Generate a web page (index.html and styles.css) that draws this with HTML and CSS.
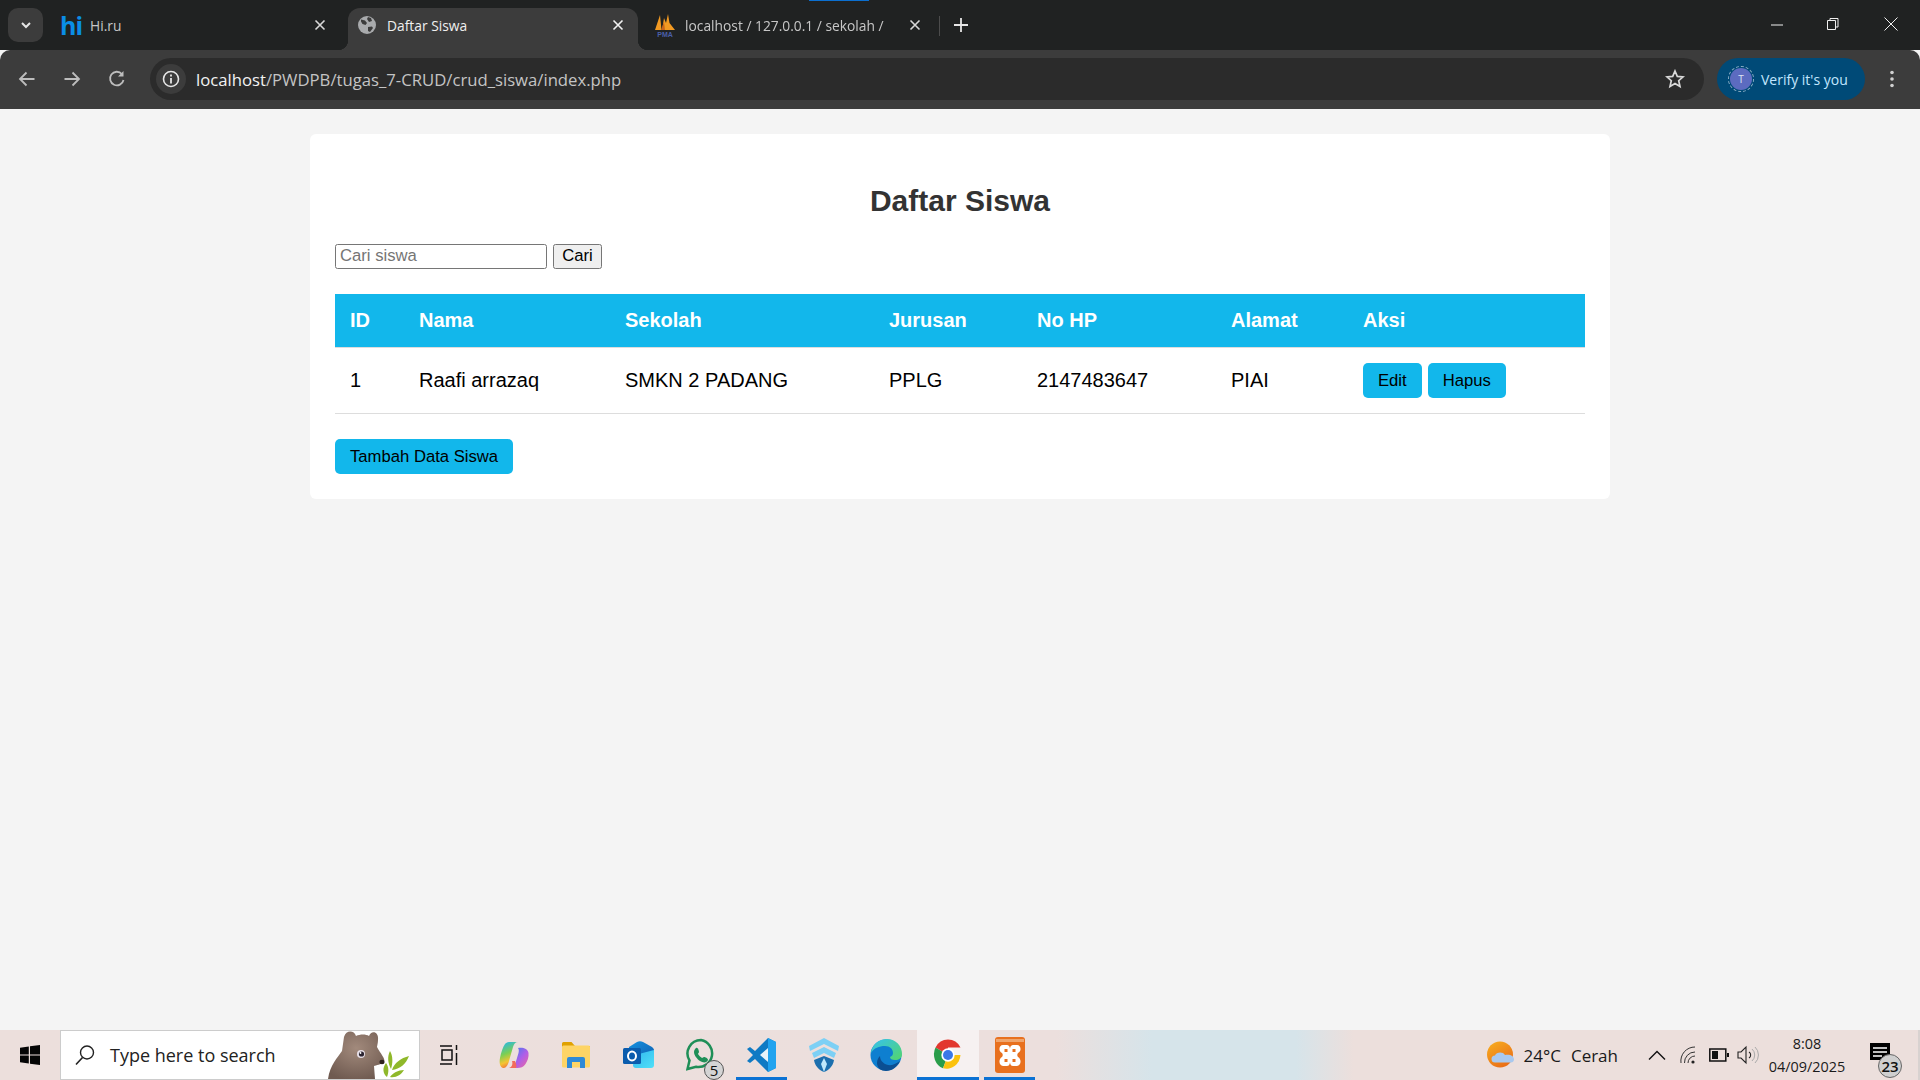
FILE: index.html
```html
<!DOCTYPE html>
<html lang="id">
<head>
<meta charset="utf-8">
<title>Daftar Siswa</title>
<link rel="stylesheet" href="styles.css">
</head>
<body>
<header class="tabstrip">
  <span class="tab-search"><svg width="14" height="14" viewBox="0 0 14 14"><path d="M3 5l4 4 4-4" fill="none" stroke="#e6e6e6" stroke-width="2"/></svg></span>
  <div class="tab tab-first">
    <span class="hi-logo">hi</span>
    <span class="tab-title">Hi.ru</span>
    <svg class="tab-close" width="12" height="12" viewBox="0 0 12 12"><path d="M1.5 1.5l9 9M10.5 1.5l-9 9" stroke="#d8d8d8" stroke-width="1.6"/></svg>
  </div>
  <div class="tab tab-active">
    <svg class="globe" width="18" height="18" viewBox="0 0 18 18"><circle cx="9" cy="9" r="9" fill="#a9abad"/><path d="M3 3.500l4 1 2 2.500-1.500 2-3-1-1.500-2.500zM10 11l4-.5 1 1.500-3 4-2-1zM10 1l3 1 1 3-3 1-2-3z" fill="#3c3c3c"/></svg>
    <span class="tab-title tab-title-active">Daftar Siswa</span>
    <svg class="tab-close" width="12" height="12" viewBox="0 0 12 12"><path d="M1.5 1.5l9 9M10.5 1.5l-9 9" stroke="#f2f2f2" stroke-width="1.6"/></svg>
  </div>
  <div class="tab tab-third">
    <svg class="pma" width="22" height="24" viewBox="0 0 22 24"><path d="M1 17L6 2l1.500 15zM8 17L10 5l2 5 2-9 1.500 9L21 17z" fill="#f29a22"/><path d="M7 17L10 9l1 8z" fill="#c9661a"/><text x="11" y="23.500" text-anchor="middle" class="pma-text">PMA</text></svg>
    <span class="tab-title tab-title-clip">localhost / 127.0.0.1 / sekolah / </span>
    <svg class="tab-close" width="12" height="12" viewBox="0 0 12 12"><path d="M1.5 1.5l9 9M10.5 1.5l-9 9" stroke="#d8d8d8" stroke-width="1.6"/></svg>
  </div>
  <span class="tab-sep"></span>
  <svg class="tab-plus" width="14" height="14" viewBox="0 0 14 14"><path d="M7 0v14M0 7h14" stroke="#e6e6e6" stroke-width="1.8"/></svg>
  <span class="strip-fill"></span>
  <svg class="win-btn win-min" width="12" height="12" viewBox="0 0 12 12"><path d="M0 6h12" stroke="#f0f0f0" stroke-width="1"/></svg>
  <svg class="win-btn win-max" width="14" height="14" viewBox="0 0 14 14"><path d="M1.500 3.500h8v9h-8zM4 3.500V1.500h8v8.500h-2.500" fill="none" stroke="#f0f0f0" stroke-width="1"/></svg>
  <svg class="win-btn win-x" width="14" height="14" viewBox="0 0 14 14"><path d="M.5.5l13 13M13.500.5l-13 13" stroke="#f0f0f0" stroke-width="1"/></svg>
  <span class="top-accent"></span>
</header>
<nav class="toolbar">
  <svg class="nav-btn" width="18" height="16" viewBox="0 0 18 16"><path d="M16.500 8H2M8.500 1.500L2 8l6.500 6.500" fill="none" stroke="#bdbdbd" stroke-width="1.800"/></svg>
  <svg class="nav-btn" width="18" height="16" viewBox="0 0 18 16"><path d="M1.500 8H16M9.500 1.500L16 8l-6.500 6.500" fill="none" stroke="#bdbdbd" stroke-width="1.800"/></svg>
  <svg class="nav-btn" width="18" height="18" viewBox="0 0 18 18"><path d="M15.500 10a6.800 6.800 0 1 1-1.600-6" fill="none" stroke="#bdbdbd" stroke-width="1.800"/><path d="M15.500 1v5.500H10z" fill="#bdbdbd"/></svg>
  <div class="omnibox">
    <span class="info"><svg width="18" height="18" viewBox="0 0 18 18"><circle cx="9" cy="9" r="7.500" fill="none" stroke="#e6e6e6" stroke-width="1.600"/><path d="M9 8v5.500M9 4.500v2" stroke="#e6e6e6" stroke-width="1.800"/></svg></span>
    <span class="url"><span class="url-host">localhost</span>/PWDPB/tugas_7-CRUD/crud_siswa/index.php</span>
    <svg class="star" width="20" height="20" viewBox="0 0 20 20"><path d="M10 2l2.300 5.400 5.700.5-4.300 3.800 1.300 5.700-5-3-5 3 1.300-5.700L2 7.900l5.700-.5z" fill="none" stroke="#d8d8d8" stroke-width="1.700"/></svg>
  </div>
  <div class="profile">
    <span class="avatar">T</span>
    <span class="profile-text">Verify it's you</span>
  </div>
  <svg class="menu" width="4" height="18" viewBox="0 0 4 18"><circle cx="2" cy="2.500" r="1.800" fill="#d0d0d0"/><circle cx="2" cy="9" r="1.800" fill="#d0d0d0"/><circle cx="2" cy="15.500" r="1.800" fill="#d0d0d0"/></svg>
</nav>
<main class="page">
  <section class="container">
    <h2 class="title">Daftar Siswa</h2>
    <form class="search-form">
      <input class="search-input" type="text" placeholder="Cari siswa">
      <button class="search-btn" type="button">Cari</button>
    </form>
    <table class="data">
      <thead>
        <tr>
          <th class="c-id">ID</th><th class="c-nama">Nama</th><th class="c-sek">Sekolah</th><th class="c-jur">Jurusan</th><th class="c-hp">No HP</th><th class="c-al">Alamat</th><th>Aksi</th>
        </tr>
      </thead>
      <tbody>
        <tr>
          <td>1</td><td>Raafi arrazaq</td><td>SMKN 2 PADANG</td><td>PPLG</td><td>2147483647</td><td>PIAI</td>
          <td class="actions-cell"><div class="actions"><a class="btn">Edit</a><a class="btn">Hapus</a></div></td>
        </tr>
      </tbody>
    </table>
    <a class="btn btn-add">Tambah Data Siswa</a>
  </section>
</main>
<footer class="taskbar">
  <span class="start"><svg width="20" height="20" viewBox="0 0 20 20"><path d="M0 2.800l8.800-1.300v8H0zM10 1.300L20 0v9.500H10zM0 10.500h8.800v8L0 17.200zM10 10.500h10V20l-10-1.300z" fill="#050505"/></svg></span>
  <div class="searchbox">
    <svg class="lens" width="20" height="22" viewBox="0 0 20 22"><circle cx="12" cy="8.500" r="6.500" fill="none" stroke="#222" stroke-width="1.400"/><path d="M7.500 13.500L1 20.500" stroke="#222" stroke-width="1.600"/></svg>
    <span class="search-text">Type here to search</span>
    <svg class="bear" width="84" height="50" viewBox="0 0 84 50">
      <defs><radialGradient id="fur" cx=".5" cy=".35" r=".7"><stop offset="0" stop-color="#a28a7c"/><stop offset="1" stop-color="#6f5a50"/></radialGradient></defs>
      <path d="M0 50C2 36 10 28 14 22L16 8C18 1 26 1 28 7C32 5 38 5 41 7C43 1 51 2 50 11C50 14 49 17 49 18C52 24 58 30 56 33C53 36 48 36 46 37L47 50z" fill="url(#fur)"/>
      <circle cx="33" cy="25" r="4" fill="#e8e0e8"/><circle cx="33.500" cy="25" r="2.600" fill="#2b2330"/><circle cx="32.500" cy="24" r=".9" fill="#fff"/>
      <ellipse cx="54" cy="33" rx="2.600" ry="2.200" fill="#2d221e"/>
      <path d="M62 22c3 5 3 12 1 18-3-6-4-12-1-18zM58 34c3 4 3 9 1 14-4-3-5-9-1-14zM64 41c2-7 9-12 17-14-3 8-9 13-17 14zM62 48c3-4 8-7 14-7-3 5-8 8-14 7z" fill="#8fb82a"/>
    </svg>
  </div>
  <div class="apps">
    <span class="app"><svg class="taskview" width="20" height="24" viewBox="0 0 20 24"><path d="M1 3h12M1 21h12M3 7h10v10H3zM17.500 2v5M17.500 10v12" fill="none" stroke="#111" stroke-width="1.500"/></svg></span>
    <span class="app"><svg width="30" height="28" viewBox="0 0 30 28"><defs><linearGradient id="cp1" x1="0" y1="0" x2="1" y2="1"><stop offset="0" stop-color="#2f7ff0"/><stop offset=".55" stop-color="#b05ee8"/><stop offset="1" stop-color="#f0689a"/></linearGradient><linearGradient id="cp2" x1=".2" y1="0" x2=".5" y2="1"><stop offset="0" stop-color="#25b8e8"/><stop offset=".45" stop-color="#7ccf52"/><stop offset=".75" stop-color="#f5c531"/><stop offset="1" stop-color="#f0663c"/></linearGradient></defs><path d="M19 7c4-1 10 0 10.500 5 .5 4-1 8-3 11-2 3-5 4-8 4h-6c2-1 3-3 4-5l3-10c.5-2 .5-4-.5-5z" fill="url(#cp1)"/><path d="M10 1h9c-3 0-4 2-5 5l-4 14c-1 4-3 7-5 7C1 27 0 22 1 17 2 11 4 6 6 3c1-1 2-2 4-2z" fill="url(#cp2)"/><path d="M13 20c1 3 0 6-3 7h7c1-2 0-5-1-7z" fill="#f26b5b"/></svg></span>
    <span class="app"><svg width="28" height="26" viewBox="0 0 28 26"><path d="M0 1.500A1.500 1.500 0 0 1 1.500 0h8L13 4h15v3H0z" fill="#e0a100"/><rect y="3.500" width="28" height="22" rx="1.500" fill="#fed465"/><path d="M5 26v-9a2 2 0 0 1 2-2h14a2 2 0 0 1 2 2v9h-5v-6h-8v6z" fill="#2f8ad6"/></svg></span>
    <span class="app"><svg width="31" height="28" viewBox="0 0 31 28"><defs><linearGradient id="ol" x1="0" y1="0" x2="1" y2="1"><stop offset="0" stop-color="#1490df"/><stop offset="1" stop-color="#0f5fb0"/></linearGradient><linearGradient id="ol2" x1="0" y1="0" x2="1" y2="1"><stop offset="0" stop-color="#2fb6ee"/><stop offset="1" stop-color="#50e0f8"/></linearGradient></defs><path d="M14 1c2-1 4-1 6 0l9 5c1 1 2 2 2 3v4L17 19H6V6z" fill="url(#ol)"/><path d="M12 14l19-5v15c0 2-1 3-3 3H13c-2 0-3-1-3-3z" fill="url(#ol2)"/><rect y="7" width="18" height="16" rx="1.500" fill="#0b5cad"/><ellipse cx="9" cy="15" rx="4" ry="4.500" fill="none" stroke="#fff" stroke-width="2"/></svg></span>
    <span class="app"><svg class="wa" width="31" height="34" viewBox="0 0 31 34"><path d="M15 2a13.500 13.500 0 0 0-11.500 20.500L1.500 31l8.500-2.200A13.500 13.500 0 1 0 15 2z" fill="none" stroke="#1f8f57" stroke-width="2.500"/><path d="M10 10c2-1 3 3 3 4s-1 1-1 2c1 2 3 3 4 4 1 0 1-1 2-1s4 1 4 3c-1 3-5 3-8 1s-6-6-6-9c0-2 1-3 2-4z" fill="#1f8f57"/></svg><span class="wa-badge">5</span></span>
    <span class="app app-line"><svg width="30" height="36" viewBox="0 0 30 36"><path d="M21 1l8 4v26l-8 4-13-13-5 4-3-2 6-6-6-6 3-2 5 4z" fill="#0f7ac4"/><path d="M21 1l8 4v26l-8 4z" fill="#22a3ef"/><path d="M21 11v14l-8-7z" fill="#fff" opacity=".9"/></svg></span>
    <span class="app"><svg width="30" height="34" viewBox="0 0 30 34"><path d="M15 0L30 8l-1 5-14-7L1 13 0 8z" fill="#7dd0f5"/><path d="M15 9l12 6-2 5-10-5-10 5-2-5z" fill="#7dd0f5"/><path d="M5 22l10-4 10 4c-1 6-5 10-10 12C10 32 6 28 5 22z" fill="#1c6fae"/><path d="M15 20l3 6-3 8-3-8z" fill="#bfe8fb"/></svg></span>
    <span class="app"><svg width="32" height="36" viewBox="0 0 32 36"><defs><linearGradient id="ed" x1="0" y1="0" x2="1" y2="1"><stop offset="0" stop-color="#35c1f1"/><stop offset="1" stop-color="#54d66a"/></linearGradient></defs><circle cx="16" cy="18" r="15.500" fill="#0e7fd0"/><path d="M1 16C3 4 13 2 17 2c9 0 15 7 15 15 0 4-3 6-7 6-3 0-5-1-5-3 2-1 3-2 3-4 0-4-3-7-8-7-6 0-11 2-14 7z" fill="url(#ed)"/><path d="M10 19c0 6 6 10 12 9 4-1 6-3 8-4-3 6-8 10-14 10-5 0-9-3-9-8 0-3 1-5 3-7z" fill="#0b4f92"/></svg></span>
    <span class="app app-active"><svg width="30" height="36" viewBox="0 0 36 36"><path d="M18 18L3 9A17 18 0 0 1 33 9H18z" fill="#e2372e"/><path d="M18 18L3 9A17 18 0 0 0 12 34z" fill="#2a9d4a"/><path d="M18 18h15a17 18 0 0 1-21 16z" fill="#fbc20e"/><circle cx="18" cy="18" r="8" fill="#fff"/><circle cx="18" cy="18" r="6" fill="#3b78e7"/></svg></span>
    <span class="app app-line"><svg width="30" height="36" viewBox="0 0 30 36"><rect width="30" height="36" rx="3" fill="#e8701e"/><rect x="1" y="2" width="28" height="3" fill="#f0a56c"/><path d="M8 8h4c3 0 3 4 3 4s0-4 3-4h4c4 0 5 6 1 8-1 1-1 3 0 4 4 2 3 9-1 9h-4c-3 0-3-4-3-4s0 4-3 4H8c-4 0-5-7-1-9 1-1 1-3 0-4-4-2-3-8 1-8z" fill="#fff"/><path d="M9.500 12h3v3h-3zM17.500 12h3v3h-3zM9.500 22h3v3h-3zM17.500 22h3v3h-3z" fill="#e8701e"/></svg></span>
  </div>
  <span class="strip-fill"></span>
  <div class="tray">
    <svg class="weather" width="28" height="28" viewBox="0 0 28 28"><defs><linearGradient id="sun" x1="0" y1="0" x2=".6" y2="1"><stop offset="0" stop-color="#f8b01f"/><stop offset="1" stop-color="#ea6f18"/></linearGradient></defs><circle cx="13" cy="13.500" r="13" fill="url(#sun)"/><path d="M8 21.500a3.500 3.500 0 0 1 0-7c1-3.500 8-4.500 10-.5 5-1 9 1 9 4.500 0 2-1.500 3-3 3z" fill="#a9c9ef"/></svg>
    <span class="temp">24°C</span>
    <span class="cond">Cerah</span>
    <svg class="tray-caret" width="18" height="12" viewBox="0 0 18 12"><path d="M1 10.500l8-8 8 8" fill="none" stroke="#111" stroke-width="1.400"/></svg>
    <svg class="tray-wifi" width="16" height="20" viewBox="0 0 16 20"><path d="M1 18A14 14 0 0 1 15 2M4.500 18A10.500 10.500 0 0 1 15 7M8 18a7 7 0 0 1 7-7" fill="none" stroke="#333" stroke-width="1"/><circle cx="13" cy="17" r="1.600" fill="#222"/></svg>
    <svg class="tray-batt" width="20" height="14" viewBox="0 0 20 14"><rect x=".8" y="1" width="16" height="12" fill="none" stroke="#111" stroke-width="1.500"/><rect x="3" y="3" width="6" height="8" fill="#111"/><rect x="18" y="5" width="2" height="4" fill="#111"/></svg>
    <svg class="tray-vol" width="22" height="20" viewBox="0 0 22 20"><path d="M1 7h3l5-5v16l-5-5H1z" fill="none" stroke="#222" stroke-width="1.100"/><path d="M12 7a3.500 3.500 0 0 1 0 6" fill="none" stroke="#222" stroke-width="1.100"/><path d="M15 4a8 8 0 0 1 0 12M18 2a11 11 0 0 1 0 16" fill="none" stroke="#aaa" stroke-width="1"/></svg>
    <div class="clock"><span>8:08</span><span>04/09/2025</span></div>
    <span class="notif"><svg width="20" height="22" viewBox="0 0 20 22"><path d="M0 0h20v17h-20z" fill="#000"/><path d="M3 5h14M3 9h14M3 13h9" stroke="#fff" stroke-width="1.300"/></svg><span class="notif-badge">23</span></span>
  </div>
</footer>
</body>
</html>
```
FILE: styles.css
```css
* { box-sizing: border-box; }
html, body { margin: 0; height: 100%; }
body {
  display: flex;
  flex-direction: column;
  height: 100vh;
  overflow: hidden;
  font-family: "Liberation Sans", Arial, sans-serif;
  background: #f4f4f4;
}

/* tab strip */
.tabstrip {
  position: relative;
  flex: 0 0 50px;
  display: flex;
  align-items: flex-end;
  background: #202222;
  padding-left: 8px;
}
.top-accent {
  position: absolute;
  left: 809px;
  top: 0;
  width: 60px;
  height: 1px;
  background: #0b6fd0;
}
.tab-search {
  width: 35px;
  height: 34px;
  margin-bottom: 8px;
  border-radius: 10px;
  background: #3c3c3c;
  display: flex;
  align-items: center;
  justify-content: center;
}
.tab {
  position: relative;
  height: 42px;
  padding-bottom: 8px;
  display: flex;
  align-items: center;
  font-family: "Open Sans", sans-serif;
  font-size: 13.800px;
  color: #c7c7c7;
}
.tab-first { width: 305px; padding-left: 17px; }
.tab-active {
  width: 290px;
  padding-left: 10px;
  background: #3c3c3c;
  border-radius: 12px 12px 0 0;
  color: #f0f0f0;
}
.tab-active::before, .tab-active::after {
  content: "";
  position: absolute;
  bottom: 0;
  width: 10px;
  height: 10px;
}
.tab-active::before { left: -10px; background: radial-gradient(circle at 0 0, transparent 10px, #3c3c3c 10.500px); }
.tab-active::after { right: -10px; background: radial-gradient(circle at 100% 0, transparent 10px, #3c3c3c 10.500px); }
.tab-third { width: 301px; padding-left: 17px; }
.hi-logo {
  width: 24px;
  font-family: "Open Sans", sans-serif;
  font-weight: 700;
  font-size: 25px;
  line-height: 30px;
  color: #0a8ee6;
  letter-spacing: -1px;
}
.tab-title { flex: 1; margin-left: 6px; white-space: nowrap; overflow: hidden; }
.tab-title-active { margin-left: 11px; }
.tab-title-clip {
  margin-left: 9px;
  -webkit-mask-image: linear-gradient(90deg, #000 94%, transparent 100%);
  mask-image: linear-gradient(90deg, #000 94%, transparent 100%);
}
.tab-close { margin-right: 14px; flex: none; }
.tab-first .tab-close { margin-right: 22px; }
.tab-third .tab-close { margin-right: 18px; }
.globe { flex: none; }
.pma { flex: none; margin-left: -1px; }
.pma-text { font: 700 7px "Liberation Sans", sans-serif; fill: #4a5fa8; }
.tab-sep {
  width: 1px;
  height: 20px;
  margin: 0 0 14px 0;
  background: #4c4c4c;
}
.tab-plus { margin: 0 0 18px 14px; }
.strip-fill { flex: 1; }
.win-btn { flex: none; margin-bottom: 19px; }
.win-min { margin-right: 43px; }
.win-max { margin-right: 44px; }
.win-x { margin-right: 22px; }

/* toolbar */
.toolbar {
  position: relative;
  flex: 0 0 59px;
  display: flex;
  align-items: center;
  background: #3c3c3c;
  border-radius: 10px 10px 0 0;
  padding: 0 0 1px 18px;
}
.nav-btn { margin-right: 27px; flex: none; }
.omnibox {
  width: 1554px;
  height: 42px;
  margin-left: -3px;
  border-radius: 21px;
  background: #2b2b2b;
  display: flex;
  align-items: center;
  padding: 0 19px 0 6px;
}
.info {
  width: 30px;
  height: 30px;
  border-radius: 50%;
  background: #3c3c3c;
  display: flex;
  align-items: center;
  justify-content: center;
}
.url {
  flex: 1;
  margin-left: 10px;
  font-family: "Open Sans", sans-serif;
  font-size: 16.700px;
  color: #c4c4c4;
  white-space: nowrap;
}
.url-host { color: #f2f2f2; }
.profile {
  width: 148px;
  height: 42px;
  margin-left: 13px;
  border-radius: 21px;
  background: #004a77;
  display: flex;
  align-items: center;
  padding-left: 13px;
}
.avatar {
  width: 22px;
  height: 22px;
  border-radius: 50%;
  background: #5c6bc0;
  outline: 1px dashed #8fb2c8;
  outline-offset: 1px;
  color: #dfe3f5;
  font: 10px/22px "Open Sans", sans-serif;
  text-align: center;
}
.profile-text {
  margin-left: 9px;
  font-family: "Open Sans", sans-serif;
  font-size: 14px;
  color: #c2e7ff;
  white-space: nowrap;
}
.menu { margin-left: 25px; }

/* page */
.page { flex: 1; padding: 25px 0; min-height: 0; }
.container {
  width: 1300px;
  margin: 0 auto;
  padding: 25px;
  background: #fff;
  border-radius: 6px;
}
.title {
  margin: 25px 0;
  text-align: center;
  font-size: 30px;
  line-height: 34.500px;
  font-weight: 700;
  color: #333;
}
.search-form { display: flex; gap: 6px; margin-bottom: 25px; height: 25.500px; }
.search-input {
  width: 212px;
  height: 25.500px;
  padding: 1px 4px;
  border: 1px solid #767676;
  border-radius: 2.500px;
  font: 16.670px "Liberation Sans", sans-serif;
  background: #fff;
}
.search-input::placeholder { color: #757575; }
.search-btn {
  width: 49px;
  height: 25.500px;
  padding: 0;
  border: 1px solid #767676;
  border-radius: 2.500px;
  background: #efefef;
  color: #000;
  font: 16.670px "Liberation Sans", sans-serif;
}
.data { width: 100%; border-collapse: collapse; table-layout: fixed; margin-bottom: 25px; }
.data th, .data td {
  padding: 15px;
  text-align: left;
  font-size: 20px;
  line-height: 23px;
  border-bottom: 1px solid #ddd;
}
.data th { background: #12b7eb; color: #fff; font-weight: 700; }
.data td { color: #000; }
.c-id { width: 69px; }
.c-nama { width: 206px; }
.c-sek { width: 264px; }
.c-jur { width: 148px; }
.c-hp { width: 194px; }
.c-al { width: 132px; }
.actions { display: flex; gap: 6px; }
.btn {
  display: inline-block;
  height: 35px;
  padding: 0 15px;
  background: #12b7eb;
  border-radius: 5px;
  color: #000;
  font-size: 16.670px;
  line-height: 35px;
}
.btn-add { display: block; width: max-content; }

/* taskbar */
.taskbar {
  flex: 0 0 50px;
  display: flex;
  align-items: stretch;
  background: linear-gradient(90deg, #ecdfdc 0, #ecdfdd 55%, #d6e4ea 60%, #d6e4ea 67.500%, #ecdfdc 70.500%, #ecdfdc 100%);
}
.start {
  width: 60px;
  display: flex;
  align-items: center;
  justify-content: center;
}
.searchbox {
  position: relative;
  width: 360px;
  display: flex;
  align-items: center;
  background: #fff;
  border: 1px solid #ccc;
  padding-left: 14px;
}
.lens { flex: none; }
.search-text {
  margin-left: 15px;
  font-family: "Open Sans", sans-serif;
  font-size: 18px;
  color: #222;
  white-space: nowrap;
}
.bear { position: absolute; left: 267px; bottom: 0; }
.apps { display: flex; margin-left: 1px; }
.app {
  position: relative;
  width: 62px;
  display: flex;
  align-items: center;
  justify-content: center;
}
.taskview { margin-right: 6px; }
.app-active { background: #f6f1f1; }
.app-active::after, .app-line::after {
  content: "";
  position: absolute;
  bottom: 0;
  height: 3px;
  background: #0b72d4;
}
.app-active::after { left: 0; right: 0; }
.app-line::after { left: 5px; right: 6px; }
.wa { margin-left: 3px; }
.wa-badge {
  position: absolute;
  left: 35px;
  top: 30px;
  width: 20px;
  height: 20px;
  border-radius: 50%;
  background: #d4d4d4;
  border: 1px solid #555;
  color: #111;
  font: 15px/18px "Open Sans", sans-serif;
  text-align: center;
}
.tray { display: flex; align-items: center; }
.weather { flex: none; }
.temp, .cond {
  font-family: "Open Sans", sans-serif;
  font-size: 17px;
  color: #1a1a1a;
  white-space: nowrap;
}
.temp { margin-left: 8px; }
.cond { margin-left: 10px; }
.tray-caret { margin-left: 30px; }
.tray-wifi { margin-left: 14px; }
.tray-batt { margin-left: 13px; }
.tray-vol { margin-left: 8px; }
.clock {
  width: 92px;
  margin-left: 2px;
  display: flex;
  flex-direction: column;
  align-items: center;
  gap: 4px;
  font-family: "Open Sans", sans-serif;
  font-size: 14.400px;
  line-height: 19px;
  color: #1a1a1a;
}
.notif { position: relative; width: 58px; margin-left: 9px; height: 100%; display: flex; align-items: center; padding-left: 8px; border-right: 2px solid #d8d2d0; }
.notif svg { margin-top: -2px; }
.notif-badge {
  position: absolute;
  left: 16px;
  top: 24px;
  width: 24px;
  height: 24px;
  border-radius: 50%;
  background: #cfcfcf;
  border: 1px solid #666;
  color: #111;
  font: 600 15px/22px "Open Sans", sans-serif;
  text-align: center;
}
```
